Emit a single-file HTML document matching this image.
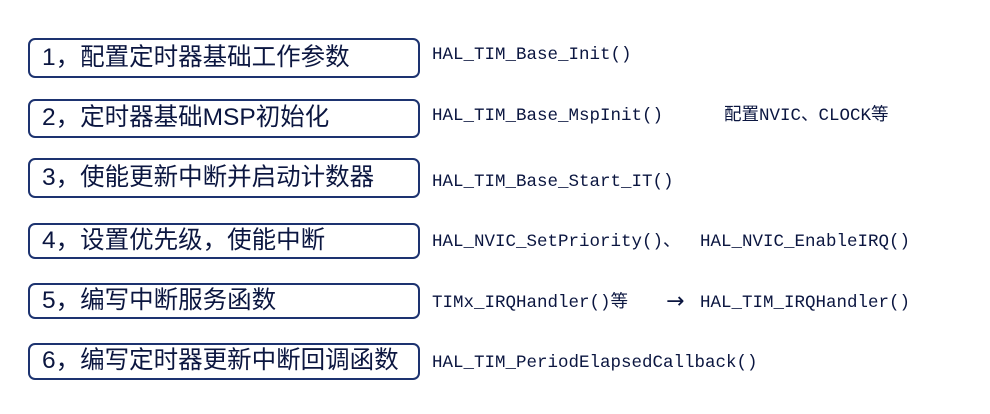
<!DOCTYPE html>
<html><head><meta charset="utf-8"><style>
body{margin:0;width:990px;height:414px;background:#fff;position:relative;overflow:hidden;font-family:"Liberation Sans","Noto Sans CJK SC",sans-serif;color:#0b1640}
.b{position:absolute;left:28px;width:392px;border:2px solid #1d3370;border-radius:7px;box-sizing:border-box;font-size:24.5px;line-height:1;padding-left:12px;display:flex;align-items:center}
.t{position:absolute;font-family:"Liberation Mono","Noto Sans CJK SC",monospace;font-size:17.5px;line-height:1;white-space:pre;color:#0b1640}
</style></head><body>
<div class="b" style="top:38px;height:40px">1，配置定时器基础工作参数</div>
<div class="b" style="top:99px;height:39px">2，定时器基础MSP初始化</div>
<div class="b" style="top:158px;height:40px">3，使能更新中断并启动计数器</div>
<div class="b" style="top:223px;height:36px">4，设置优先级，使能中断</div>
<div class="b" style="top:283px;height:36px">5，编写中断服务函数</div>
<div class="b" style="top:343px;height:37px">6，编写定时器更新中断回调函数</div>
<div class="t" style="left:432px;top:47px">HAL_TIM_Base_Init()</div>
<div class="t" style="left:432px;top:108px">HAL_TIM_Base_MspInit()</div>
<div class="t" style="left:724px;top:108px">配置NVIC、CLOCK等</div>
<div class="t" style="left:432px;top:174px">HAL_TIM_Base_Start_IT()</div>
<div class="t" style="left:432px;top:234px">HAL_NVIC_SetPriority()、</div>
<div class="t" style="left:700px;top:234px">HAL_NVIC_EnableIRQ()</div>
<div class="t" style="left:432px;top:295px">TIMx_IRQHandler()等</div>
<div class="t" style="left:666px;top:291px;font-size:22px;font-family:'DejaVu Sans',sans-serif">→</div>
<div class="t" style="left:700px;top:295px">HAL_TIM_IRQHandler()</div>
<div class="t" style="left:432px;top:355px">HAL_TIM_PeriodElapsedCallback()</div>
</body></html>
